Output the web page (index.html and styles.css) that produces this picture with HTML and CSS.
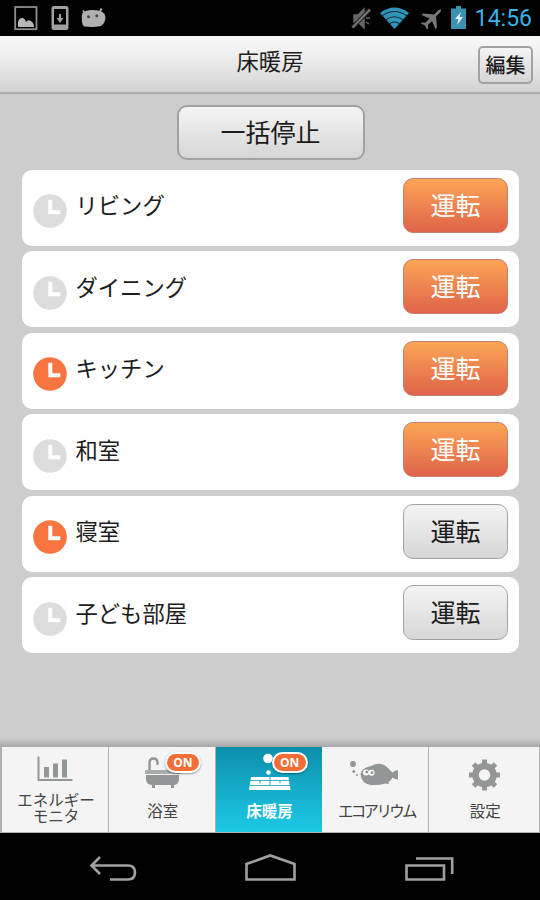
FILE: index.html
```html
<!DOCTYPE html>
<html lang="ja">
<head>
    <meta charset="UTF-8">
    <meta name="viewport" content="width=device-width, initial-scale=1.0">
    <title>床暖房</title>
    <link rel="stylesheet" href="styles.css">
</head>
<body>
    <svg class="defs" width="0" height="0">
        <symbol id="timer" viewBox="0 0 34 34">
            <circle cx="17" cy="17" r="16.8" fill="currentColor"/>
            <path d="M17.300 5.800v12.400h10" fill="none" stroke="#fff" stroke-width="4"/>
        </symbol>
    </svg>

    <div class="status-bar">
        <svg width="110" height="36" viewBox="0 0 110 36">
            <rect x="15.2" y="7" width="21.3" height="22.2" fill="none" stroke="#8f8f8f" stroke-width="1.8"/>
            <path d="M18 27v-5q1-4 4-4 3 0 4 4 2-3 5-1 3 2 3 6z" fill="#b8b8b8"/>
            <path d="M54 6h12q2.500 0 2.500 2.500V27.500q0 2.500-2.500 2.500H54q-2.500 0-2.500-2.500V8.500Q51.500 6 54 6zM54 9v15.500h12V9z" fill="#a0a0a0" fill-rule="evenodd"/>
            <path d="M60 14v5" stroke="#a0a0a0" stroke-width="2"/>
            <path d="M56.500 18h7L60 23z" fill="#a0a0a0"/>
            <path d="M82 14q2-4 11-4 12 0 12.500 7 0 6-4.500 9-7 1.500-17 .5-3-3-2-12.500z" fill="#b0b0b0"/>
            <path d="M83 10.500l2 3M101.500 8.500l-2 4" stroke="#b0b0b0" stroke-width="1.800"/>
            <circle cx="88.500" cy="16.700" r="1.500" fill="#444"/>
            <circle cx="96.800" cy="15.800" r="1.500" fill="#444"/>
        </svg>
        <div class="status-right">
            <svg width="122" height="36" viewBox="350 0 122 36">
                <path d="M354 15h4l6-6v19l-6-6h-4zM366 14l3-2M366 18h4M366 22l3 2" fill="#666" stroke="#666" stroke-width="1.500"/>
                <path d="M352.500 27.500L370 9.500" stroke="#222" stroke-width="4"/>
                <path d="M352.500 27.500L370 9.500" stroke="#777" stroke-width="2"/>
                <path d="M380 13q14.500-11 29 0L394.500 29z" fill="#3295bb"/>
                <path d="M381 16.500q13.500-10 27 0M385 20.300q9.500-7 19 0M389 24q5.500-4 11 0" fill="none" stroke="#0b2835" stroke-width="1.100"/>
                <path d="M441 9l-2.500 1-4.500 4.500-11-1-1.500 1.500 8 3.500-4 4-3.500 0-1 1 4 2 2 4 1-1 0-3.500 4-4 3.500 8 1.500-1.500-1-11 4.500-4.500z" fill="#777"/>
                <path d="M456 6h5v2.500h5v20.500h-15v-20.500h5z" fill="#3b91b0"/>
                <path d="M461 12l-6 7h3.500l-1.500 6 6-8h-3.500z" fill="#e6f3f8"/>
            </svg>
            <span class="time">14:56</span>
        </div>
    </div>

    <div class="header">
        <h1>床暖房</h1>
        <button class="edit">編集</button>
    </div>

    <div class="content">
        <button class="stop-all">一括停止</button>
        <div class="rooms">
            <div class="room">
                <svg class="timer"><use href="#timer"/></svg>
                <span class="name">リビング</span>
                <button class="run on">運転</button>
            </div>
            <div class="room">
                <svg class="timer"><use href="#timer"/></svg>
                <span class="name">ダイニング</span>
                <button class="run on">運転</button>
            </div>
            <div class="room">
                <svg class="timer set"><use href="#timer"/></svg>
                <span class="name">キッチン</span>
                <button class="run on">運転</button>
            </div>
            <div class="room">
                <svg class="timer"><use href="#timer"/></svg>
                <span class="name">和室</span>
                <button class="run on">運転</button>
            </div>
            <div class="room">
                <svg class="timer set"><use href="#timer"/></svg>
                <span class="name">寝室</span>
                <button class="run">運転</button>
            </div>
            <div class="room">
                <svg class="timer"><use href="#timer"/></svg>
                <span class="name">子ども部屋</span>
                <button class="run">運転</button>
            </div>
        </div>
        <div class="shade"></div>
    </div>

    <div class="tabs">
        <div class="tab">
            <svg width="106" height="48" viewBox="2 747 106 48">
                <path d="M38.500 756.500v23.500h34" fill="none" stroke="#939696" stroke-width="2"/>
                <path d="M44 767h5v10.500h-5zM53 763.500h5v14h-5zM62 759.500h5v18h-5z" fill="#939696"/>
            </svg>
            <span class="label two">エネルギー<br>モニタ</span>
        </div>
        <div class="tab">
            <svg width="106" height="48" viewBox="109 747 106 48">
                <path d="M149.500 771v-8q0-4.500 4-4.500t4 4.500v2" fill="none" stroke="#939696" stroke-width="2.400"/>
                <path d="M145 770h35v4h-35z" fill="#a8abab"/>
                <path d="M146 775h33v4q0 5.500-5 6v3h-3v-3h-16v3h-3v-3q-6-.5-6-6z" fill="#939696"/>
            </svg>
            <span class="label">浴室</span>
            <span class="badge">ON</span>
        </div>
        <div class="tab active">
            <svg width="106" height="48" viewBox="216 747 106 48">
                <circle cx="268" cy="758.500" r="4.800" fill="#fff"/>
                <circle cx="268.500" cy="772.500" r="2.300" fill="#fff"/>
                <path d="M251 777h37.500l2 13h-41.500z" fill="#fff"/>
                <path d="M250 780.500h39M249.500 785.500h41M270 777v8.500M260 780.500v3M280 780.500v3" stroke="#42adc4" stroke-width="1.100"/>
            </svg>
            <span class="label">床暖房</span>
            <span class="badge">ON</span>
        </div>
        <div class="tab">
            <svg width="106" height="48" viewBox="322 747 106 48">
                <circle cx="353" cy="764" r="2.900" fill="#939696"/>
                <circle cx="353.800" cy="771.500" r="1.500" fill="#939696"/>
                <circle cx="357" cy="775" r="1.100" fill="#939696"/>
                <path d="M360.500 774q1-5 7-7 4-1 7-2.500 8-2.500 14 4 2.500 3 4 4 1.500-2 5.500-2.500v9.500q-4 0-5.500-2-1 3-4 4.500l.5 2-4-.5q-6 2-14 1.500-10-1.500-10.500-11z" fill="#939696"/>
                <circle cx="366" cy="772.500" r="3" fill="#fff"/>
                <circle cx="371.500" cy="772.800" r="3" fill="#fff"/>
                <circle cx="366.800" cy="772" r="1.500" fill="#939696"/>
                <circle cx="372" cy="772.500" r="1.500" fill="#939696"/>
            </svg>
            <span class="label narrow">エコアリウム</span>
        </div>
        <div class="tab">
            <svg width="110" height="48" viewBox="429 747 110 48">
                <g transform="translate(484.500 775)">
                    <circle r="9" fill="none" stroke="#939696" stroke-width="6.500"/>
                    <g stroke="#939696" stroke-width="5">
                        <path d="M0-15.500v6M0 9.500v6M-15.500 0h6M9.500 0h6"/>
                        <path d="M0-15.500v6M0 9.500v6M-15.500 0h6M9.500 0h6" transform="rotate(45)"/>
                    </g>
                </g>
            </svg>
            <span class="label">設定</span>
        </div>
    </div>

    <div class="nav-bar">
        <svg width="540" height="67" viewBox="0 833 540 67" fill="none" stroke="#a0a0a0" stroke-width="2.600">
            <path d="M100 857l-8.500 8.500 8.500 8.500M92 865.500h36q7 0 7 7t-7 7h-18"/>
            <path d="M246.500 879.500v-15.500l23.700-8.500 24.300 8.500v15.500z"/>
            <path d="M406.500 865.500h37.500v14h-37.500zM416 858.500h36.200v15.500"/>
        </svg>
    </div>
</body>
</html>
```
FILE: styles.css
```css
* {
    box-sizing: border-box;
}
body {
    margin: 0;
    width: 540px;
    height: 900px;
    display: flex;
    flex-direction: column;
    overflow: hidden;
    background: #000;
    font-family: "Noto Sans CJK JP", sans-serif;
    color: #1c1c1c;
}
button {
    font-family: inherit;
    padding: 0;
    color: #1c1c1c;
    border: 1px solid #a2a2a2;
    background: linear-gradient(#f4f4f4, #d6d6d6);
}
svg {
    display: block;
}
.defs {
    position: absolute;
}
.status-bar {
    height: 36px;
    display: flex;
    justify-content: space-between;
}
.status-right {
    display: flex;
    padding-right: 8px;
}
.time {
    width: 60px;
    font: 23px/38px Roboto, sans-serif;
    color: #33b5e5;
    text-align: right;
    white-space: nowrap;
}
.header {
    height: 58px;
    display: grid;
    grid-template-columns: 1fr auto 1fr;
    border-bottom: 2px solid #adadad;
    background: linear-gradient(#f8f8f8, #efefef 35%, #d3d3d3);
}
.header h1 {
    grid-column: 2;
    margin: 0;
    font-size: 22.3px;
    line-height: 48px;
    font-weight: 400;
}
.edit {
    justify-self: end;
    width: 55px;
    height: 38px;
    margin: 10px 7px 0 0;
    border-radius: 5px;
    border-width: 2px;
    font-size: 20px;
    font-weight: 500;
    line-height: 32px;
}
.content {
    height: 653px;
    display: flex;
    flex-direction: column;
    align-items: center;
    padding: 10.5px 21px 0 22px;
    background: #cdcdcd;
}
.stop-all {
    width: 188px;
    height: 55px;
    border-radius: 10px;
    border-width: 2px;
    font-size: 25px;
    line-height: 48px;
    padding-bottom: 2px;
}
.rooms {
    align-self: stretch;
    display: flex;
    flex-direction: column;
    gap: 5.6px;
    margin-top: 10px;
}
.room {
    height: 76px;
    display: flex;
    align-items: center;
    padding: 0 11px;
    border-radius: 10px;
    background: #fff;
}
.timer {
    width: 34px;
    height: 34px;
    margin-top: 7px;
    color: #dcdcdc;
}
.timer.set {
    color: #f87541;
}
.name {
    flex: 1;
    margin: 0 0 7px 8.500px;
    font-size: 22.3px;
    line-height: 32px;
}
.run {
    width: 105px;
    height: 55px;
    margin-bottom: 5px;
    padding-bottom: 3px;
    border-radius: 10px;
    font-size: 25px;
    line-height: 50px;
}
.run.on {
    color: #fff;
    border-color: #c08070;
    background: linear-gradient(#fca556, #df6349);
}
.shade {
    align-self: stretch;
    height: 9px;
    margin: auto -21px 0 -22px;
    background: linear-gradient(#cdcdcd, #a8a8a8);
}
.tabs {
    height: 86px;
    display: grid;
    grid-template-columns: repeat(4, 106px) 110px;
    gap: 0.8px;
    padding: 0 0 1px 2px;
    background: #b0b0b0;
}
.tab {
    position: relative;
    background: #f4f4f4;
    text-align: center;
}
.tab.active {
    background: linear-gradient(#0d8fac, #1cc9e6);
}
.label {
    display: block;
    padding-left: 2px;
    font-size: 15.5px;
    line-height: 30px;
    color: #444;
    white-space: nowrap;
}
.label.two {
    margin-top: -4px;
    line-height: 16px;
}
.label.narrow {
    letter-spacing: -2.7px;
}
.active .label {
    color: #fff;
    font-weight: 700;
}
.badge {
    position: absolute;
    top: 5px;
    right: 14px;
    width: 36px;
    height: 21px;
    border: 2px solid #fff;
    border-radius: 11px;
    background: #f36e36;
    box-shadow: 0 1px 2px rgba(0, 0, 0, 0.4);
    color: #fff;
    font: 700 12px/17px "Open Sans", sans-serif;
}
.nav-bar {
    height: 67px;
}
```
